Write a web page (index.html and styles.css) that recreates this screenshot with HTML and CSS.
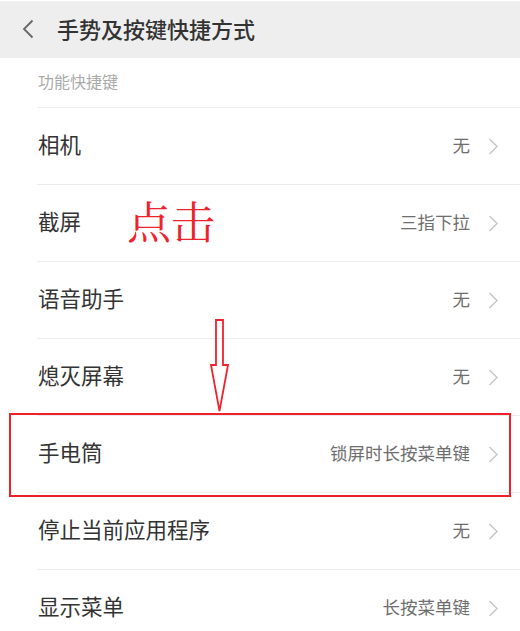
FILE: index.html
```html
<!DOCTYPE html>
<html lang="zh-CN">
<head>
    <meta charset="UTF-8">
    <title>手势及按键快捷方式</title>
    <link rel="stylesheet" href="styles.css">
</head>
<body>
    <div class="header">
        <svg class="back" width="12" height="20" viewBox="0 0 12 20"><path d="M10.5 1.5 L2 10 L10.5 18.5" fill="none" stroke="#666" stroke-width="1.8"/></svg>
        <span class="title">手势及按键快捷方式</span>
    </div>
    <div class="list">
        <div class="section">功能快捷键</div>
        <div class="row"><span class="name">相机</span><span class="val">无</span><svg class="chev" width="11" height="17" viewBox="0 0 11 17"><path d="M1.5 1 L9 8.5 L1.5 16" fill="none" stroke="#c4c4c4" stroke-width="1.4"/></svg></div>
        <div class="row"><span class="name">截屏</span><span class="val">三指下拉</span><svg class="chev" width="11" height="17" viewBox="0 0 11 17"><path d="M1.5 1 L9 8.5 L1.5 16" fill="none" stroke="#c4c4c4" stroke-width="1.4"/></svg></div>
        <div class="row"><span class="name">语音助手</span><span class="val">无</span><svg class="chev" width="11" height="17" viewBox="0 0 11 17"><path d="M1.5 1 L9 8.5 L1.5 16" fill="none" stroke="#c4c4c4" stroke-width="1.4"/></svg></div>
        <div class="row"><span class="name">熄灭屏幕</span><span class="val">无</span><svg class="chev" width="11" height="17" viewBox="0 0 11 17"><path d="M1.5 1 L9 8.5 L1.5 16" fill="none" stroke="#c4c4c4" stroke-width="1.4"/></svg></div>
        <div class="row"><span class="name">手电筒</span><span class="val">锁屏时长按菜单键</span><svg class="chev" width="11" height="17" viewBox="0 0 11 17"><path d="M1.5 1 L9 8.5 L1.5 16" fill="none" stroke="#c4c4c4" stroke-width="1.4"/></svg></div>
        <div class="row"><span class="name">停止当前应用程序</span><span class="val">无</span><svg class="chev" width="11" height="17" viewBox="0 0 11 17"><path d="M1.5 1 L9 8.5 L1.5 16" fill="none" stroke="#c4c4c4" stroke-width="1.4"/></svg></div>
        <div class="row"><span class="name">显示菜单</span><span class="val">长按菜单键</span><svg class="chev" width="11" height="17" viewBox="0 0 11 17"><path d="M1.5 1 L9 8.5 L1.5 16" fill="none" stroke="#c4c4c4" stroke-width="1.4"/></svg></div>
    </div>

    <div class="note">点击</div>
    <svg class="arrow" width="20" height="94" viewBox="0 0 20 94"><path d="M6 1 H13 V46 H18 L9.5 92 L1 46 H6 Z" fill="none" stroke="#f0222c" stroke-width="1.8"/></svg>
    <div class="mark"></div>
</body>
</html>
```

FILE: styles.css
```css
html,body{
    margin:0;
    padding:0;
    background:#fff;
    font-family:"Noto Sans CJK SC","Noto Sans",sans-serif;
    overflow:hidden;
}
.header{
    height:57px;
    margin-top:1px;
    background:#eeeeee;
    display:flex;
    align-items:center;
    padding-left:22px;
}
.back{
    margin-right:23px;
    margin-top:-2px;
}
.title{
    font-size:22px;
    color:#333;
    font-weight:500;
    margin-top:-3px;
}
.list{
    padding-left:37px;
}
.section{
    height:49px;
    line-height:47px;
    font-size:16px;
    color:#aaa;
    padding-left:1px;
}
.row{
    height:76px;
    border-top:1px solid #ececec;
    display:flex;
    align-items:center;
    padding-right:21px;
}
.name{
    flex:1;
    font-size:21.5px;
    color:#333;
    padding-left:1px;
    margin-top:-5px;
}
.val{
    font-size:17.5px;
    color:#6e6e6e;
    margin-right:18px;
    margin-top:-3px;
}
.note{
    position:absolute;
    left:127px;
    top:192px;
    font-family:"Noto Serif CJK SC","AR PL UMing CN",serif;
    font-size:44px;
    color:#f0222c;
    line-height:56px;
}
.arrow{
    position:absolute;
    left:210px;
    top:319px;
}
.mark{
    position:absolute;
    left:9px;
    top:413px;
    width:498px;
    height:80px;
    border:2px solid #ee2029;
}
```
